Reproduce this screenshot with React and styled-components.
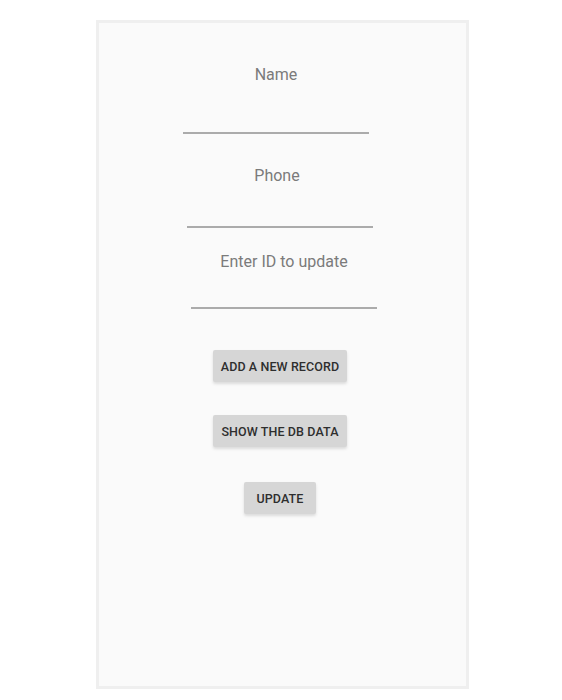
import React from "react";
import styled, { createGlobalStyle } from "styled-components";

const Global = createGlobalStyle`
  html, body { margin: 0; padding: 0; background: #ffffff; }
  body { font-family: Roboto, "Noto Sans", sans-serif; }
`;

const Page = styled.div`
  display: flex;
  padding: 20px 0 0 96px;
`;

const Panel = styled.div`
  box-sizing: border-box;
  width: 373px;
  height: 669px;
  background: #fafafa;
  border: 3px solid #efefef;
  display: flex;
  flex-direction: column;
  padding-top: 42px;
`;

const Field = styled.div`
  box-sizing: border-box;
  width: 186px;
  margin-left: ${(p) => p.$left}px;
  margin-top: ${(p) => p.$top}px;
  padding-bottom: ${(p) => p.$gap}px;
  border-bottom: 2px solid #ababab;
  display: flex;
  justify-content: center;
`;

const Label = styled.span`
  font-size: 16px;
  line-height: 20px;
  color: #7b7b7b;
  margin-right: ${(p) => p.$shift || 0}px;
`;

const Actions = styled.div`
  display: flex;
  flex-direction: column;
  align-items: center;
  margin-top: 41px;
  margin-right: 5px;
`;

const Button = styled.button`
  height: 32px;
  min-width: 72px;
  margin-top: ${(p) => p.$top}px;
  padding: 0 8px;
  border: none;
  border-radius: 2px;
  background: #d6d6d6;
  box-shadow: 0 2px 3px rgba(0, 0, 0, 0.12);
  font-family: Roboto, "Noto Sans", sans-serif;
  font-weight: 500;
  font-size: 12.5px;
  color: #2e2e2e;
  letter-spacing: 0.1px;
`;

export default function App() {
  return (
    <>
      <Global />
      <Page>
        <Panel>
          <Field $left={84} $top={0} $gap={47}>
            <Label>Name</Label>
          </Field>
          <Field $left={88} $top={32} $gap={40}>
            <Label $shift={6}>Phone</Label>
          </Field>
          <Field $left={92} $top={24} $gap={35}>
            <Label>Enter ID to update</Label>
          </Field>
          <Actions>
            <Button $top={0}>ADD A NEW RECORD</Button>
            <Button $top={33}>SHOW THE DB DATA</Button>
            <Button $top={35}>UPDATE</Button>
          </Actions>
        </Panel>
      </Page>
    </>
  );
}
